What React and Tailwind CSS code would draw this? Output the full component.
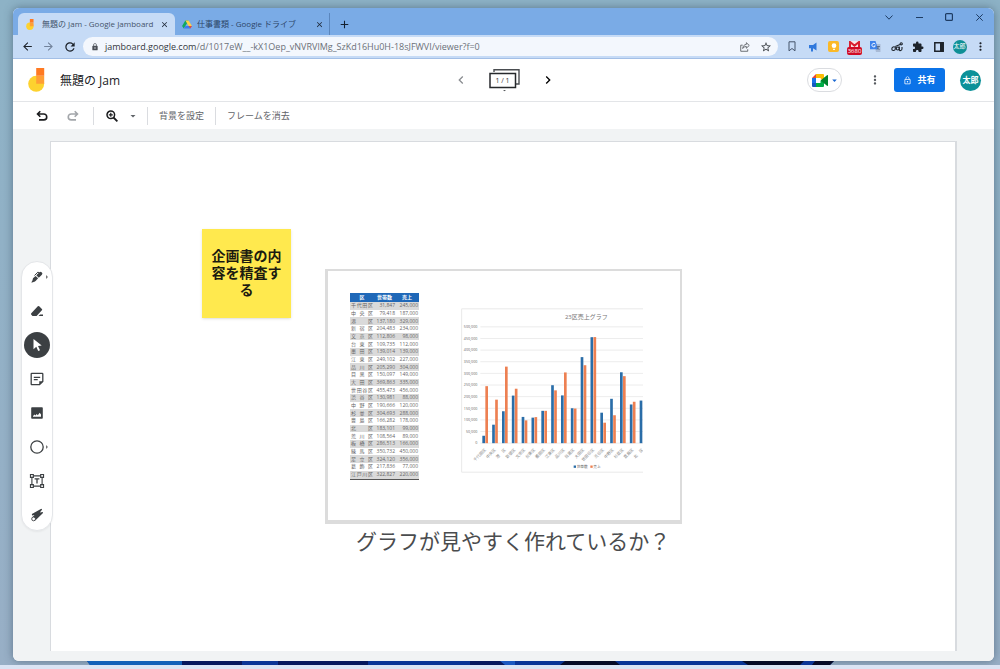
import React, { useState } from "react";
import {
  MdAdd,
  MdArrowBack,
  MdArrowForward,
  MdArrowDropDown,
  MdClose,
  MdExtension,
  MdKeyboardArrowDown,
  MdChevronLeft,
  MdChevronRight,
  MdLock,
  MdLockOutline,
  MdMoreVert,
  MdRefresh,
  MdStarBorder,
} from "react-icons/md";

const wards = [
  ["千代田区", 31847, 245000],
  ["中央区", 79418, 187000],
  ["港　区", 137180, 329000],
  ["新宿区", 204483, 234000],
  ["文京区", 112806, 98000],
  ["台東区", 109735, 112000],
  ["墨田区", 139014, 139000],
  ["江東区", 249102, 227000],
  ["品川区", 205290, 304000],
  ["目黒区", 150097, 149000],
  ["大田区", 369863, 335000],
  ["世田谷区", 455473, 456000],
  ["渋谷区", 130981, 88000],
  ["中野区", 190666, 120000],
  ["杉並区", 304693, 288000],
  ["豊島区", 166282, 178000],
  ["北　区", 183101, 99000],
  ["荒川区", 108564, 89000],
  ["板橋区", 286513, 166000],
  ["練馬区", 350732, 450000],
  ["足立区", 324120, 356000],
  ["葛飾区", 217836, 77000],
  ["江戸川区", 322827, 220000],
];

const JamLogo = ({ className }) => (
  <svg viewBox="0 0 17 24" className={className} aria-hidden="true">
    <circle cx="8.2" cy="15.8" r="8" fill="#fdd22f" />
    <path d="M8.2 7.8h8v8h-8z" fill="#ff9f35" />
    <path d="M8.2 0h8v7.8h-8z" fill="#ff7a22" />
  </svg>
);

const DriveLogo = ({ className }) => (
  <svg viewBox="0 0 24 22" className={className} aria-hidden="true">
    <path d="M8 1h8l-8 13.5L4 21 0 14.5z" fill="#11a861" />
    <path d="M8 1h8l8 13.5h-8z" fill="#ffcf48" />
    <path d="M8 14.5h16L20 21H4z" fill="#3b7ded" />
    <path d="M16 14.5h8L20 21z" fill="#e8453c" />
  </svg>
);

const MeetLogo = () => (
  <svg viewBox="0 0 17 13" className="h-[13px] w-[17px]" aria-hidden="true">
    <path d="M4 0v4H0z" fill="#ea4335" />
    <path d="M4 0h7a1 1 0 0 1 1 1v4.5H8.500V4H4z" fill="#fbbc04" />
    <path d="M0 4h4v5H0z" fill="#1a73e8" />
    <path d="M0 9h4v4H1a1 1 0 0 1-1-1z" fill="#1558c0" />
    <path d="M4 4h4.500v5H4z" fill="#fff" />
    <path d="M4 9h4.500V7L12 5v7a1 1 0 0 1-1 1H4z" fill="#00ac47" />
    <path d="M8.500 6.500L15 1.300c.5-.4 1-.2 1 .4v9.600c0 .6-.5.800-1 .4z" fill="#00832d" />
  </svg>
);

const UndoIcon = ({ className }) => (
  <svg
    viewBox="0 0 12 12"
    className={className}
    fill="none"
    stroke="currentColor"
    strokeWidth="1.600"
    aria-hidden="true"
  >
    <path d="M4.300 1.200L1.500 4l2.800 2.800M1.800 4h6a2.900 2.900 0 0 1 0 5.900H3" />
  </svg>
);

const ToolIcon = ({ name }) => {
  const icons = {
    pen: (
      <>
        <path d="M1.200 10.800L2 7.300 4.600 4.900l2.500 2.400-2.500 2.600-1.600 1z" fill="currentColor" />
        <path d="M5.300 4.300L8.400 1.200a1.500 1.500 0 0 1 2.100 0l.4.400a1.500 1.500 0 0 1 0 2.100L7.800 6.700z" fill="currentColor" />
        <path d="M3.500 4.500l3.400-3.400 1.400.7" stroke="currentColor" strokeWidth="1" fill="none" />
        <path d="M.4 11.800l.8-2.200 1.400 1.400z" fill="currentColor" />
      </>
    ),
    eraser: (
      <>
        <path d="M6.800 1.300a1 1 0 0 1 1.400 0l2.700 2.600a1 1 0 0 1 0 1.400L5.600 11H1.500L.3 9.700a1 1 0 0 1 0-1.400z" fill="currentColor" />
        <path d="M7.500 11l1.600-1.400H12V11z" fill="currentColor" />
      </>
    ),
    select: <path d="M2.500 0l8.200 6.500-3.700.4 2 4.300-1.800.8-1.900-4.200-2.800 2.500z" fill="currentColor" />,
    note: (
      <g fill="none" stroke="currentColor">
        <path d="M.8.300h10.400a.6.600 0 0 1 .6.600v7.500l-3.300 3.300H.8a.6.600 0 0 1-.6-.6V.9a.6.600 0 0 1 .6-.6z" strokeWidth="1.300" />
        <path d="M2.800 4.300h6.400M2.800 6.600h3.900" strokeWidth="1.200" />
        <path d="M8.500 11.600V8.500h3.200z" fill="currentColor" strokeWidth=".5" />
      </g>
    ),
    image: (
      <path
        d="M1 .2h10c.5 0 .8.300.8.8v10c0 .5-.3.800-.8.800H1a.8.800 0 0 1-.8-.8V1c0-.5.300-.8.800-.8zM2 9.700h8V7.400L8.700 5.800 6.800 8.200 5.700 7.100 4.400 8.500 3.600 7.400 2 9z"
        fillRule="evenodd"
        fill="currentColor"
      />
    ),
    circle: <circle cx="6" cy="6" r="6.200" fill="none" stroke="currentColor" strokeWidth="1.300" />,
    text: (
      <g fill="none" stroke="currentColor">
        <path d="M2 .9h8M2 11.100h8M.9 2v8M11.100 2v8" strokeWidth="1.100" />
        <path d="M-.5-.5h2.800v2.800H-.5zM9.700-.5h2.800v2.800H9.700zM-.5 9.700h2.800v2.800H-.5zM9.700 9.700h2.800v2.800H9.700z" fill="#fff" strokeWidth="1.200" />
        <path d="M3.600 3.900h4.800M6 3.900v4.600" strokeWidth="1.300" />
      </g>
    ),
    laser: (
      <>
        <path d="M.9 5L10.300-.2l.9.800-2.400 3 3-.6.200 1.100-7.700 7.400L1.200 8.600l2.300-2.500L1 6.400z" fill="currentColor" />
        <circle cx="2.600" cy="9.900" r="1.900" fill="#fff" stroke="currentColor" strokeWidth=".9" />
      </>
    ),
  };
  return (
    <svg viewBox="0 0 12 12" className="h-3 w-3 overflow-visible" aria-hidden="true">
      {icons[name]}
    </svg>
  );
};

const tools = [
  { name: "pen", label: "ペン", more: true },
  { name: "eraser", label: "消去" },
  { name: "select", label: "選択" },
  { name: "note", label: "付箋" },
  { name: "image", label: "画像を追加" },
  { name: "circle", label: "円", more: true },
  { name: "text", label: "テキスト ボックス" },
  { name: "laser", label: "レーザー" },
];

const TitleBar = () => (
  <div className="flex h-[27px] items-end bg-[#7aabe6] pl-[5px]">
    <div className="flex h-[22px] w-[157px] items-center rounded-t-md bg-[#c6dbf6] pr-[6px] pl-2 text-[#44546b]">
      <JamLogo className="mr-2 h-[11px] w-[8px]" />
      <span className="flex-1 truncate text-[8px]">無題の Jam - Google Jamboard</span>
      <button aria-label="タブを閉じる" className="text-[#1f2a3a]">
        <MdClose size={9} />
      </button>
    </div>
    <div className="flex h-[22px] w-[155px] items-center border-r border-[#5a86bd] pr-[5px] pl-[7px] text-[#2c4566]">
      <DriveLogo className="mr-[5px] h-[9px] w-[10px]" />
      <span className="flex-1 truncate text-[8px]">仕事書類 - Google ドライブ</span>
      <button aria-label="タブを閉じる" className="text-[#1f2a3a]">
        <MdClose size={9} />
      </button>
    </div>
    <button aria-label="新しいタブ" className="ml-2 flex h-[22px] items-center text-[#14202f]">
      <MdAdd size={13} />
    </button>
    <div className="ml-auto flex h-full items-start pt-[3px] text-[#1e3c63]">
      <button aria-label="タブを検索" className="flex h-3 w-[30px] items-center justify-center">
        <svg viewBox="0 0 8 5" className="h-[5px] w-2">
          <path d="M.5.500L4 4.200 7.500.5" fill="none" stroke="currentColor" />
        </svg>
      </button>
      <button aria-label="最小化" className="flex h-3 w-[30px] items-center justify-center">
        <svg viewBox="0 0 7 7" className="h-[7px] w-[7px]">
          <path d="M0 3.500h7" stroke="currentColor" />
        </svg>
      </button>
      <button aria-label="最大化" className="flex h-3 w-[30px] items-center justify-center">
        <svg viewBox="0 0 8 8" className="h-[8px] w-[8px]">
          <rect x=".6" y=".6" width="6.800" height="6.800" rx="1" fill="none" stroke="currentColor" strokeWidth="1.200" />
        </svg>
      </button>
      <button aria-label="閉じる" className="flex h-3 w-[30px] items-center justify-center">
        <svg viewBox="0 0 7 7" className="h-[7px] w-[7px]">
          <path d="M.3.300l6.400 6.400M6.700.3L.3 6.700" stroke="currentColor" />
        </svg>
      </button>
    </div>
  </div>
);

const Extension = ({ label, children }) => (
  <button aria-label={label} className="flex h-[20px] w-[21px] items-center justify-center">
    {children}
  </button>
);

const AddressBar = () => {
  const [url, setUrl] = useState(
    "/d/1017eW__-kX1Oep_vNVRVlMg_SzKd16Hu0H-18sJFWVI/viewer?f=0"
  );
  return (
    <div className="flex h-6 items-center border-b border-[#a3bfe6] bg-[#c6dbf6] pr-[3px] pl-1 text-[#1d232b]">
      <Extension label="戻る">
        <MdArrowBack size={13} />
      </Extension>
      <Extension label="進む">
        <MdArrowForward size={13} className="text-[#72839b]" />
      </Extension>
      <Extension label="再読み込み">
        <MdRefresh size={14} />
      </Extension>
      <div className="mx-[3px] flex h-[19px] flex-1 items-center rounded-full bg-[#f3f7fd] pr-[2px] pl-2 text-[9px] text-[#6b7078]">
        <MdLock size={8} className="mr-[6px] text-[#4a4f57]" />
        <label htmlFor="url" className="text-[#34383e]">
          jamboard.google.com
        </label>
        <input
          id="url"
          value={url}
          onChange={(e) => setUrl(e.target.value)}
          className="min-w-0 flex-1 bg-transparent outline-none"
        />
        <button aria-label="共有" className="flex w-[21px] justify-center text-[#5f6368]">
          <svg viewBox="0 0 11 11" className="h-[10px] w-[10px]" fill="none" stroke="currentColor" strokeWidth="1">
            <path d="M3 3.500H.8v6.700h7.700V8" />
            <path d="M7 .8l3.200 3L7 6.800V5C4.800 5 3.700 5.800 3 7.200 3.200 4.600 4.500 2.900 7 2.600z" />
          </svg>
        </button>
        <button aria-label="ブックマーク" className="flex w-[21px] justify-center text-[#3c4147]">
          <MdStarBorder size={12} />
        </button>
      </div>
      <Extension label="しおり">
        <svg viewBox="0 0 8 11" className="h-[11px] w-2" fill="none" stroke="#45546b">
          <path d="M1 .8h6v9L4 7.500 1 9.800z" />
        </svg>
      </Extension>
      <Extension label="お知らせ">
        <svg viewBox="0 0 10 10" className="h-[10px] w-[10px]" fill="#2f78dc">
          <path d="M1 3h4L8.500.5v8L5 6.200V9.500H3V6.200H1z" />
        </svg>
      </Extension>
      <Extension label="Keep">
        <span className="flex h-[11px] w-[11px] items-center justify-center rounded-xs bg-[#fbb928]">
          <svg viewBox="0 0 6 8" className="h-[7px] w-[6px]" fill="#fff">
            <circle cx="3" cy="3" r="2.700" />
            <path d="M2 6.500h2V8H2z" />
          </svg>
        </span>
      </Extension>
      <Extension label="Gmail">
        <span className="flex flex-col items-center pt-[3px]">
          <svg viewBox="0 0 11 6" className="h-[6px] w-[11px]">
            <path d="M0 0h11v6H0z" fill="#f6e6ea" />
            <path d="M1 6V1l4.500 3.600L10 1v5" fill="none" stroke="#d81f30" strokeWidth="2" />
          </svg>
          <span className="rounded-xs bg-[#d00a25] px-px text-[6px] leading-[8px] text-white">
            3680
          </span>
        </span>
      </Extension>
      <Extension label="翻訳">
        <svg viewBox="0 0 11 11" className="h-[11px] w-[11px]">
          <path d="M4 3h6.500v8H6z" fill="#a9bbd6" />
          <path d="M0 0h5.500l2.700 8.300H0z" fill="#3f83ec" />
          <path d="M5.300 3.200A1.800 1.800 0 1 0 5.300 5H3.900" fill="none" stroke="#fff" strokeWidth=".9" />
          <path d="M6.500 5.500h3.500M8.300 5v.8c0 1-.6 2-1.300 2.700M7.200 6.500l2.300 2.500" fill="none" stroke="#52657f" strokeWidth=".8" />
        </svg>
      </Extension>
      <Extension label="リンク">
        <svg viewBox="0 0 12 10" className="h-[10px] w-3" fill="none" stroke="#1d232b" strokeWidth="1.100">
          <path d="M4.300 5.200C3 4.200.8 5 .8 6.900c0 2 3 2.200 3.500.3V5 7.500" />
          <circle cx="6.800" cy="6.500" r="1.500" />
          <path d="M8.300 4.500v3c0 1.800 2.700 1.300 2.700-.8V5" />
          <circle cx="10.200" cy="1.800" r="1.100" />
          <path d="M4.300 4.500L9 2.500" />
        </svg>
      </Extension>
      <Extension label="拡張機能">
        <MdExtension size={12} />
      </Extension>
      <Extension label="サイドパネル">
        <svg viewBox="0 0 10 10" className="h-[10px] w-[10px]">
          <path d="M.8.800h8.400v8.400H.8z" fill="none" stroke="#1d232b" strokeWidth="1.500" />
          <path d="M6 1h3.500v8H6z" fill="#1d232b" />
        </svg>
      </Extension>
      <Extension label="プロフィール">
        <span className="flex h-[14px] w-[14px] shrink-0 items-center justify-center rounded-full bg-[#0e8f96] text-[6px] text-white">
          太郎
        </span>
      </Extension>
      <Extension label="メニュー">
        <MdMoreVert size={13} />
      </Extension>
    </div>
  );
};

const Header = () => (
  <header className="grid h-[43px] grid-cols-3 items-center border-b border-[#e3e5e8] pr-[13px] pl-[15px]">
    <div className="flex items-center">
      <JamLogo className="h-6 w-[17px]" />
      <h1 className="ml-[15px] pt-[2px] text-xs text-[#202124]">無題の Jam</h1>
    </div>
    <div className="flex items-center justify-center gap-5">
      <button aria-label="前のフレーム" className="text-[#8a8d91]">
        <MdChevronLeft size={16} />
      </button>
      <button aria-label="フレーム一覧を開く" className="relative h-[24px] w-[31px]">
        <svg viewBox="0 0 31 24" className="h-6 w-[31px]" aria-hidden="true">
          <path d="M5 4V1.700h25V16h-3" fill="none" stroke="#4a4d51" strokeWidth="1.400" />
          <path d="M1 5.500h25.500v14H1z" fill="#fff" stroke="#27292c" strokeWidth="1.500" />
          <path d="M14 22h3l-1.500 1.200z" fill="#55585c" />
        </svg>
        <span className="absolute inset-x-0 top-[8px] pr-1 text-center text-[7px] leading-[9px] text-[#333]">
          1 / 1
        </span>
      </button>
      <button aria-label="次のフレーム" className="text-black">
        <MdChevronRight size={16} />
      </button>
    </div>
    <div className="flex items-center justify-end">
      <button
        aria-label="Meet"
        className="flex h-6 w-[35px] items-center justify-center rounded-full border border-[#dadce0]"
      >
        <MeetLogo />
        <MdArrowDropDown size={11} className="-mr-1 text-[#1967d2]" />
      </button>
      <button aria-label="その他" className="mr-3 ml-[26px] text-[#55595e]">
        <MdMoreVert size={14} />
      </button>
      <button className="flex h-6 w-[51px] items-center justify-center gap-[5px] rounded-[3px] bg-[#0b73e8] text-[9px] font-bold text-white">
        <MdLockOutline size={9} />
        共有
      </button>
      <button
        aria-label="アカウント"
        className="ml-[15px] flex h-[21px] w-[21px] items-center justify-center rounded-full bg-[#0c9199] text-[8px] font-bold text-white"
      >
        太郎
      </button>
    </div>
  </header>
);

const Toolbar = () => (
  <div className="flex h-[27px] items-center pl-[23px] text-[9px] text-[#5f6368]">
    <button aria-label="元に戻す" className="text-[#1b1c1e]">
      <UndoIcon className="h-3 w-3" />
    </button>
    <button aria-label="やり直す" className="ml-[19px] text-[#a3a6aa]">
      <UndoIcon className="h-3 w-3 -scale-x-100" />
    </button>
    <span className="mr-3 ml-[14px] h-[18px] w-px bg-[#dadce0]" />
    <button aria-label="ズーム" className="text-[#1b1c1e]">
      <svg viewBox="0 0 12 12" className="h-3 w-3" fill="none" stroke="currentColor">
        <circle cx="4.800" cy="4.800" r="3.800" strokeWidth="1.500" />
        <path d="M7.500 7.500l3.900 3.900" strokeWidth="1.800" />
        <path d="M4.800 2.800v4M2.800 4.800h4" strokeWidth="1.200" />
      </svg>
    </button>
    <button aria-label="ズームのメニュー" className="ml-[9px]">
      <MdArrowDropDown size={12} />
    </button>
    <span className="mr-[11px] ml-2 h-[18px] w-px bg-[#dadce0]" />
    <button>背景を設定</button>
    <span className="mx-[11px] h-[18px] w-px bg-[#dadce0]" />
    <button>フレームを消去</button>
  </div>
);

const ToolPalette = () => {
  const [active, setActive] = useState("select");
  return (
    <div className="absolute inset-y-0 left-[8px] flex items-center pt-[2px]">
      <div className="flex w-[32px] flex-col items-center gap-2 rounded-full border border-[#e4e6e9] bg-white py-[2px] shadow-xs">
        {tools.map((tool) => (
          <button
            key={tool.name}
            aria-label={tool.label}
            onClick={() => setActive(tool.name)}
            className={`relative flex h-[26px] w-[26px] items-center justify-center rounded-full ${
              active === tool.name ? "bg-[#3c4043] text-white" : "text-[#3c4043]"
            }`}
          >
            <ToolIcon name={tool.name} />
            {tool.more && (
              <svg viewBox="0 0 2 4" className="absolute right-[2px] h-1 w-[2px]" fill="#777">
                <path d="M0 0l2 2-2 2z" />
              </svg>
            )}
          </button>
        ))}
      </div>
    </div>
  );
};

const WardTable = () => (
  <table className="h-[187px] w-[69px] border-collapse border-b border-[#555] text-[5px] leading-[5px] text-[#666]">
    <thead>
      <tr className="h-[9px] bg-[#1f68b8] text-white">
        <th className="w-[24px] p-0">区</th>
        <th className="w-[21px] p-0">世帯数</th>
        <th className="w-[24px] p-0">売上</th>
      </tr>
    </thead>
    <tbody>
      {wards.map(([name, homes, sales]) => (
        <tr key={name} className="odd:bg-[#dadada]">
          <td className="p-0">
            <span className="flex justify-between px-px">
              {name.split("").map((char, i) => (
                <span key={i}>{char}</span>
              ))}
            </span>
          </td>
          <td className="p-0 text-right">{homes.toLocaleString("en-US")}</td>
          <td className="p-0 pr-px text-right">{sales.toLocaleString("en-US")}</td>
        </tr>
      ))}
    </tbody>
  </table>
);

const WardChart = () => {
  const base = 405;
  const toY = (value) => base - (value / 500000) * 349;
  const ticks = Array.from({ length: 11 }, (_, i) => i * 50000);
  return (
    <svg viewBox="0 0 546 494" className="h-[165px] w-[182px]" role="img" aria-label="23区売上グラフ">
      <path d="M546 2H2v490h544" fill="none" stroke="#e9e9e9" strokeWidth="3" />
      <text x="376" y="32" textAnchor="middle" fontSize="18" fill="#777">
        23区売上グラフ
      </text>
      {ticks.map((tick) => (
        <g key={tick}>
          <path d={`M58 ${toY(tick)}H546`} stroke="#e2e2e2" strokeWidth="2" />
          <text x="49" y={toY(tick) + 4} textAnchor="end" fontSize="11" fill="#666">
            {tick.toLocaleString("en-US")}
          </text>
        </g>
      ))}
      {wards.slice(0, 17).map(([name, homes, sales], i) => {
        const x = 64 + i * 29.5;
        return (
          <g key={name}>
            <rect x={x} y={toY(homes)} width="8" height={base - toY(homes)} fill="#2a6da8" />
            {i < 16 && (
              <rect x={x + 9} y={toY(sales)} width="8" height={base - toY(sales)} fill="#ed8052" />
            )}
            <text
              transform={`translate(${x + 12} 426) rotate(-45)`}
              textAnchor="end"
              fontSize="12"
              fill="#888"
            >
              {name}
            </text>
          </g>
        );
      })}
      <rect x="338" y="472" width="7" height="7" fill="#2a6da8" />
      <text x="347" y="480" fontSize="11" fill="#666">
        世帯数
      </text>
      <rect x="388" y="472" width="7" height="7" fill="#ed8052" />
      <text x="397" y="480" fontSize="11" fill="#666">
        売上
      </text>
    </svg>
  );
};

const Board = () => (
  <main className="relative flex min-h-0 flex-1 bg-[#f1f3f4] px-[37px] pt-3 pb-[10px]">
    <div className="relative flex-1 overflow-hidden border-t border-r-2 border-l border-[#d8dbdf] bg-white">
      <div className="absolute top-[87px] left-[151px] flex h-[89px] w-[89px] items-center justify-center bg-[#ffe94e] px-[9px] pb-[2px] text-center text-sm leading-[17px] font-bold text-[#1c1b10] shadow">
        企画書の内容を精査する
      </div>
      <div className="absolute top-[127px] left-[274px] flex h-[255px] w-[357px] items-start border-t-2 border-r-2 border-b-4 border-l-3 border-[#dcdcdc] bg-white pt-[22px] pl-[22px]">
        <WardTable />
        <div className="mt-[15px] ml-[42px]">
          <WardChart />
        </div>
      </div>
      <p className="absolute top-[384px] left-[305px] text-[21px] leading-[30px] whitespace-nowrap text-[#4a4c4e]">
        グラフが見やすく作れているか？
      </p>
    </div>
    <ToolPalette />
  </main>
);

const App = () => {
  return (
    <div
      lang="ja"
      className="flex h-screen flex-col overflow-hidden bg-linear-to-b from-[#8db2c6] to-[#98afc6] pt-2 font-['Open_Sans','Noto_Sans_CJK_JP',sans-serif]"
    >
      <div className="mr-[6px] ml-[13px] flex min-h-0 flex-1 flex-col overflow-hidden rounded-md bg-white shadow-[0_0_8px_rgba(40,60,80,0.5)]">
        <TitleBar />
        <AddressBar />
        <Header />
        <Toolbar />
        <Board />
      </div>
      <svg viewBox="0 0 1000 4" preserveAspectRatio="none" className="h-1 w-full" aria-hidden="true">
        <path d="M87 0h747l-4 4H90z" fill="#0a3596" />
        <path d="M87 0h95v4H90z" fill="#1260b8" />
        <path d="M182 0h60v4h-60zM278 0h90v4h-90zM470 0h35v4h-35z" fill="#06175c" />
        <path d="M500 0h15v4h-10z" fill="#1b58c0" />
        <path d="M565 0h50l5 4h-60zM742 0h62l-4 4h-52zM815 0h19l-4 4h-18z" fill="#050a26" />
      </svg>
      <div className="h-1 bg-[#dbe4f4]" />
    </div>
  );
};

export default App;
